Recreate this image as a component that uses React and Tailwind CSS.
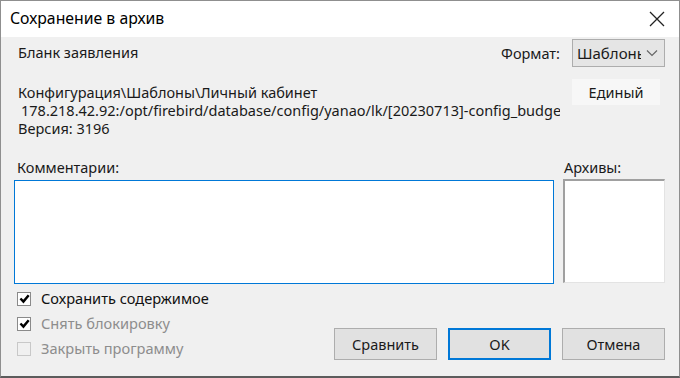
import React from "react";

function Check({ checked, disabled, label }) {
  return (
    <div className="flex items-center h-[25px]">
      <div
        className={
          "w-[14px] h-[14px] border flex items-center justify-center " +
          (disabled && !checked ? "border-[#c8c8c8] bg-[#f0f0f0]" : "border-[#8a8a8a] bg-white")
        }
      >
        {checked && (
          <svg width="11" height="11" viewBox="0 0 10 10">
            <path d="M1.3 5 L4 7.8 L8.8 2" fill="none" stroke="#000" strokeWidth="2.2" />
          </svg>
        )}
      </div>
      <span className={"ml-[10px] text-[14.6px] " + (disabled ? "text-[#8d8d8d]" : "text-[#111]")}>{label}</span>
    </div>
  );
}

export default function App() {
  return (
    <div
      className="w-[680px] h-[378px] bg-[#f0f0f0] border border-[#8f8f8f] border-b-2 border-b-[#5c5c5c] flex flex-col overflow-hidden text-[#1a1a1a]"
      style={{ fontFamily: '"Noto Sans", "Open Sans", sans-serif' }}
    >
      <div className="h-[36px] bg-white flex items-center justify-between pl-[9px] pr-[14px] shrink-0">
        <span className="text-[15.8px] text-black">Сохранение в архив</span>
        <svg width="16" height="16" viewBox="0 0 16 16">
          <path d="M1 1 L15 15 M15 1 L1 15" stroke="#222" strokeWidth="1.3" />
        </svg>
      </div>
      <div className="flex-1 flex flex-col pl-[13px] pr-[14px] pt-[2px] text-[14.5px] leading-[17px]">
        <div className="flex justify-between items-start h-[28px]">
          <div className="pl-[4px] pt-[5px]">Бланк заявления</div>
          <div className="flex items-center">
            <span className="mr-[12px] mt-[1px]">Формат:</span>
            <div className="w-[93px] h-[28px] border border-[#adadad] bg-[#e5e5e5] flex items-center pl-[4px] pr-[6px] overflow-hidden">
              <span className="text-[15px] whitespace-nowrap overflow-hidden text-clip w-[64px]">Шаблоны</span>
              <svg className="ml-auto" width="12" height="8" viewBox="0 0 12 8">
                <path d="M1 1.5 L6 6.5 L11 1.5" fill="none" stroke="#666" strokeWidth="1.2" />
              </svg>
            </div>
          </div>
        </div>
        <div className="flex justify-between items-start mt-[12px]">
          <div className="pl-[4px] pt-[4px] leading-[18px] w-[546px] overflow-hidden whitespace-nowrap">
            <div>Конфигурация\Шаблоны\Личный кабинет</div>
            <div className="pl-[3px]">178.218.42.92:/opt/firebird/database/config/yanao/lk/[20230713]-config_budget.fdb</div>
            <div>Версия: 3196</div>
          </div>
          <div className="w-[88px] h-[26px] bg-[#f7f7f7] flex items-center justify-center mr-[5px]">Единый</div>
        </div>
        <div className="flex mt-[22px] gap-[9px]">
          <div className="flex flex-col w-[540px]">
            <div className="pl-[3px] h-[20px]">Комментарии:</div>
            <div className="h-[104px] border border-[#0078d7] bg-white mt-[1px]" />
          </div>
          <div className="flex flex-col w-[102px]">
            <div className="pl-[1px] h-[20px]">Архивы:</div>
            <div className="h-[104px] bg-white border border-[#e3e3e3] border-t-2 border-l-2 border-t-[#a0a0a0] border-l-[#a0a0a0]" />
          </div>
        </div>
        <div className="flex justify-between items-start mt-[2px]">
          <div className="pl-[3px] flex flex-col">
            <Check checked label="Сохранить содержимое" />
            <Check checked disabled label="Снять блокировку" />
            <Check disabled label="Закрыть программу" />
          </div>
          <div className="flex gap-[11px] mt-[42px]">
            <button className="w-[103px] h-[32px] bg-[#e1e1e1] border border-[#adadad] text-[14.5px]">Сравнить</button>
            <button className="w-[103px] h-[32px] bg-[#e1e1e1] border-2 border-[#0078d7] text-[14.5px]">OK</button>
            <button className="w-[103px] h-[32px] bg-[#e1e1e1] border border-[#adadad] text-[14.5px]">Отмена</button>
          </div>
        </div>
      </div>
    </div>
  );
}
